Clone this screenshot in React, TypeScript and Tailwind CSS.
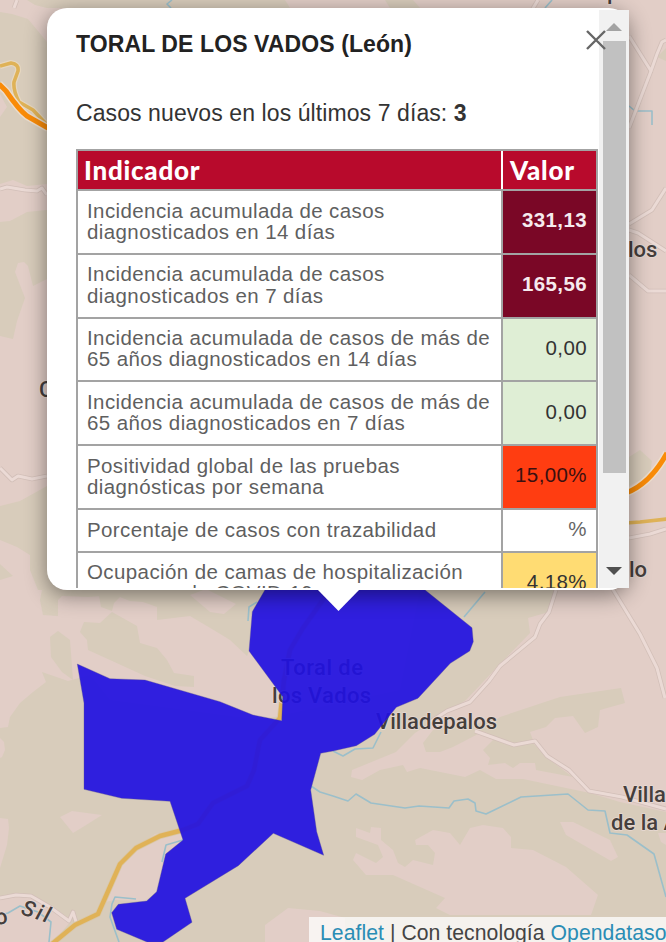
import { clsx } from "clsx";

type Indicator = {
  label: string[];
  value: string;
  tone: string;
};

const indicators: Indicator[] = [
  {
    label: ["Incidencia acumulada de casos", "diagnosticados en 14 días"],
    value: "331,13",
    tone: "bg-[#7a0726] text-[#f6eaee] font-bold",
  },
  {
    label: ["Incidencia acumulada de casos", "diagnosticados en 7 días"],
    value: "165,56",
    tone: "bg-[#7a0726] text-[#f6eaee] font-bold",
  },
  {
    label: ["Incidencia acumulada de casos de más de", "65 años diagnosticados en 14 días"],
    value: "0,00",
    tone: "bg-[#dfeed5] text-[#333]",
  },
  {
    label: ["Incidencia acumulada de casos de más de", "65 años diagnosticados en 7 días"],
    value: "0,00",
    tone: "bg-[#dfeed5] text-[#333]",
  },
  {
    label: ["Positividad global de las pruebas", "diagnósticas por semana"],
    value: "15,00%",
    tone: "bg-[#ff3d11] text-[#3b1010]",
  },
  {
    label: ["Porcentaje de casos con trazabilidad"],
    value: "%",
    tone: "bg-white text-[#666]",
  },
  {
    label: ["Ocupación de camas de hospitalización", "por casos de COVID-19"],
    value: "4,18%",
    tone: "bg-[#ffdc73] text-[#333]",
  },
];

const WOODS = [
  "0,12 12,14 28,19 47,42 60,60 60,190 47,184 27,186 13,180 0,184 0,117 7,107 0,94",
  "27,0 285,0 290,8 47,8 35,5",
  "385,0 413,0 420,8 390,8",
  "0,222 10,221 27,212 47,210 60,210 60,279 47,279 33,286 28,266 24,262 18,263 15,272 25,298 17,321 13,339 0,336",
  "60,482 47,486 20,501 0,506 0,540 17,547 30,555 30,570 38,590 60,590",
  "0,564 13,576 0,580",
  "40,600 42,590 100,590 102,596 88,597 62,596 58,600 58,616 43,615",
  "98,590 270,590 252,612 249,651 247,656 230,640 212,629 190,616 157,620 157,607 143,602 130,601 120,597 114,603 112,611 101,607",
  "80,632 84,622 100,623 112,612 137,626 140,643 157,648 167,660 174,673 194,676 194,687 175,686 145,676 110,660 88,650 87,640",
  "50,637 58,631 70,640 73,680 62,672 51,657",
  "0,728 8,727 10,717 20,703 33,692 46,682 42,672 68,681 90,675 110,700 260,720 400,690 420,590 556,590 549,612 528,618 530,633 500,664 466,700 415,733 396,752 352,770 351,777 362,780 380,770 403,765 407,772 420,768 465,777 480,770 496,779 523,779 566,788 590,793 620,802 666,812 666,942 0,942",
  "500,717 560,697 621,688 625,703 600,710 598,727 585,733 573,716 555,718 546,727 530,732 533,740 513,745 480,733 453,747 440,752 426,752 423,743 433,730 496,720",
  "483,750 493,740 533,743 546,757 566,772 573,777 536,770 535,763 520,763 513,768 505,763 488,765 490,758",
  "629,457 640,450 652,461 650,475 629,486",
  "657,57 666,48 666,61",
];

const CLEARINGS = [
  "190,595 206,589 236,604 224,614 210,612",
  "0,738 4,742 5,750 2,757 0,758",
  "0,818 8,819 9,828 7,845 0,868",
  "60,817 72,811 102,815 83,827 73,833",
  "0,897 29,896 50,908 72,920 53,942 0,942",
  "183,828 155,834 132,850 121,864 105,902 115,900 145,901 156,892 166,854 183,840",
  "265,942 265,925 288,908 320,911 345,918 345,942",
  "560,822 573,822 610,840 618,857 611,861 566,835",
  "415,840 433,830 450,833 460,845 470,828 483,825 503,828 511,837 511,848 533,850 566,867 598,895 591,915 450,915 436,908 445,898 393,875 366,875 353,860 356,853 376,863 383,857 378,845 356,837 356,828 370,833 371,827 381,828 381,840 393,850 398,863 405,867 413,860 433,865 435,853 428,845 416,845",
  "658,833 666,833 666,845 661,842",
];

const ROADS = [
  "0,189 7,187 25,190 37,191 42,188 47,195",
  "0,468 12,480 18,476 32,479 47,476",
  "629,36 651,71 657,54 662,42 666,40",
  "651,71 629,128",
  "629,224 652,210 666,188",
  "629,230 638,233 666,251",
  "629,275 648,291 666,291",
  "629,538 650,534 666,529",
  "556,590 549,612 540,624 535,637 500,666 489,681 470,702 447,711 430,722",
  "475,731 514,745 535,741 547,756 569,770 589,791 622,797 666,809",
  "612,588 640,634 657,668 665,698",
  "0,898 16,895 31,896 50,907 69,921 73,912 77,925",
  "14,8 17,0",
  "532,10 538,0",
];

const WATERWAYS = [
  "629,106 635,111 652,111 652,125",
  "485,592 464,617",
  "257,602 249,607 248,621",
  "333,751 343,756 355,749 373,748 381,732",
  "311,786 320,792 333,796 348,801 356,794 371,803 405,808 419,806 449,808 454,801 468,799 475,803 476,811 486,814 521,797 568,794 588,810 605,811 610,833 627,835 654,854 666,897",
  "183,840 166,845 162,862",
  "136,899 115,897 112,904 110,917 119,942",
  "49,942 51,922 38,912 20,906 8,913 0,915",
  "172,0 167,4 171,8",
  "545,8 552,0",
];

const MUNICIPALITY =
  "77.3,664 110,678.7 145,680 220,701.7 253,715 281.7,720.7 282.7,696.7 249,651 252.3,611.7 264.3,591 270,580 414,580 426.3,591 472,627.7 473.3,641.7 469.7,651 450.3,663.3 418,698.3 396.3,707.3 374.7,734.3 356.3,745.7 333,751 320.7,753.3 310.7,790 316.7,831.7 323.7,855.3 273.3,833.3 238.3,865.7 185,898.3 192,922.3 163,942 147,942 116.7,929.3 111.7,912.7 118.3,904.3 146.7,901 156.7,891.7 165.7,854 183,840 170,801.3 121.7,798.3 84,789.3 84,703";

const LOCAL_ROAD =
  "330,590 303,628 290,650 284,680 280,718 260,740 254,770 247,786 213,803 198,824 183,830 160,836 136,848 120,864 98,914 75,925 52,944";

function MapLayer() {
  return (
    <svg viewBox="0 0 666 942" className="block h-full w-full" fill="none" strokeLinejoin="round">
      <rect width="666" height="942" fill="#e2cec7" />
      {WOODS.map((p) => (
        <polygon key={p} points={p} fill="#d8ccbb" />
      ))}
      {CLEARINGS.map((p) => (
        <polygon key={p} points={p} fill="#e2cec7" />
      ))}
      {WATERWAYS.map((p) => (
        <polyline key={p} points={p} stroke="#9bbfca" strokeWidth="1.6" />
      ))}
      {ROADS.map((p) => (
        <polyline key={p} points={p} stroke="#d2bfb8" strokeWidth="4.6" />
      ))}
      {ROADS.map((p) => (
        <polyline key={p} points={p} stroke="#ebdad5" strokeWidth="3" />
      ))}

      {/* Secondary and main roads */}
      <polyline points={LOCAL_ROAD} stroke="#d9c7a6" strokeWidth="6" />
      <polyline points={LOCAL_ROAD} stroke="#e0b257" strokeWidth="4.4" />
      <path d="M0 66 L11 63 Q19 64 18 71 L14 82 Q13 90 19 102 L33 110 L48 126" stroke="#e6d7c0" strokeWidth="6" />
      <path d="M0 66 L11 63 Q19 64 18 71 L14 82 Q13 90 19 102 L33 110 L48 126" stroke="#dfb257" strokeWidth="3.6" />
      <path d="M-1 84 L6 91 Q19 110 27 116 L48 128" stroke="#ecdccb" strokeWidth="8" />
      <path d="M-1 84 L6 91 Q19 110 27 116 L48 128" stroke="#f98b08" strokeWidth="5" />
      <path d="M626 523 L640 522 L667 519" stroke="#dfb257" strokeWidth="3.6" />
      <path d="M626 493 Q650 484 667 453" stroke="#ecdccb" strokeWidth="8" />
      <path d="M626 493 Q650 484 667 453" stroke="#f98b08" strokeWidth="5" />

      {/* Place names */}
      <g fill="#453e3c" className="font-['Roboto'] text-[22px] font-medium" stroke="#e8dad4" strokeWidth="1.5" paintOrder="stroke">
        <text x="281" y="675" textLength="82">Toral de</text>
        <text x="272" y="703" textLength="99">los Vados</text>
        <text x="376" y="729" textLength="121">Villadepalos</text>
        <text x="623" y="802">Villa</text>
        <text x="611" y="830">de la A</text>
        <text x="628" y="257">los</text>
        <text x="629" y="577">lo</text>
        <text x="39" y="397">C</text>
        <text x="600" y="-1">q</text>
        <text x="-4" y="925" transform="rotate(-8 -4 925)">o</text>
        <text x="20" y="914" transform="rotate(18 20 914)" fontStyle="italic" letterSpacing="2.5">Sil</text>
      </g>

      <polygon points={MUNICIPALITY} fill="#2110e1" fillOpacity="0.92" stroke="#5a4f8f" strokeOpacity="0.35" strokeWidth="1" />
    </svg>
  );
}

function IndicatorTable() {
  return (
    <div className="w-[522px] border-l-2 border-t-2 border-[#a3a3a3]">
      <div className="flex h-[40px] border-b-2 border-[#a3a3a3] bg-[#b80a2c] font-['Lato'] text-[26px] leading-[39px] font-black tracking-[0.75px] text-white">
        <div className="w-[425px] border-r-2 border-white pl-[6px]">Indicador</div>
        <div className="flex-1 border-r-2 border-[#a3a3a3] pl-[7px]">Valor</div>
      </div>
      {indicators.map((row, i) => (
        <div
          key={i}
          className={clsx(
            "flex border-b-2 border-[#a3a3a3] text-[20.5px] leading-[21.3px] tracking-[0.4px]",
            row.label.length > 1 ? "h-[63.8px]" : "h-[42.6px]"
          )}
        >
          <div className="flex w-[425px] flex-col justify-center border-r-2 border-[#a3a3a3] pb-[2px] pl-[9px] whitespace-nowrap text-[#5f5f5f]">
            {row.label.map((line) => (
              <span key={line}>{line}</span>
            ))}
          </div>
          <div className={clsx("flex flex-1 items-center justify-end border-r-2 border-[#a3a3a3] pr-[9px] pb-[4px]", row.tone)}>
            {row.value}
          </div>
        </div>
      ))}
    </div>
  );
}

function Scrollbar() {
  return (
    <div className="flex w-[30px] shrink-0 flex-col items-center bg-[#f1f1f1]">
      <div className="flex h-[31px] w-full items-end justify-center pb-[10px]">
        <svg width="16" height="8" viewBox="0 0 16 8">
          <path d="M0 8 L8 0 L16 8 Z" fill="#a3a3a3" />
        </svg>
      </div>
      <div className="h-[432px] w-[23px] bg-[#c1c1c1]"></div>
      <div className="mt-auto flex h-[21px] w-full justify-center">
        <svg width="16" height="8" viewBox="0 0 16 8">
          <path d="M0 0 L8 8 L16 0 Z" fill="#505050" />
        </svg>
      </div>
    </div>
  );
}

function Popup() {
  return (
    <div className="absolute top-[8px] left-[47px] h-[582px] w-[582px] rounded-[20px] bg-white py-[2px] shadow-[0_5px_21px_rgba(0,0,0,0.45)]">
      <div className="flex h-[578px] overflow-hidden">
        <div className="w-[552px] pl-[29px]">
          <h2 className="pt-[20px] text-[23px] leading-[28px] font-bold tracking-[0.1px] text-[#222]">TORAL DE LOS VADOS (León)</h2>
          <p className="mt-[41px] mb-[22px] text-[23px] leading-[28px] tracking-[0.09px] text-[#333]">
            Casos nuevos en los últimos 7 días: <b>3</b>
          </p>
          <IndicatorTable />
        </div>
        <Scrollbar />
      </div>
      <svg className="absolute top-[581px] left-[270px]" width="43" height="23" viewBox="0 0 43 23">
        <path d="M0 0 H43 L21.5 22 Z" fill="#fff" />
      </svg>
      <svg className="absolute top-[22px] left-[539px]" width="20" height="20" viewBox="0 0 20 20">
        <path d="M1 1 L19 19 M19 1 L1 19" stroke="#666" strokeWidth="2.4" />
      </svg>
    </div>
  );
}

export default function App() {
  return (
    <main className="relative h-[942px] w-[666px] overflow-hidden font-['Liberation_Sans',sans-serif]">
      <MapLayer />
      <Popup />
      <footer className="absolute right-0 bottom-0 h-[25px] w-[357px] overflow-hidden bg-white/75 pl-[11px] text-[21.2px] leading-[31px] tracking-[0.05px] whitespace-nowrap text-[#444]">
        <a className="text-[#2a8db5]">Leaflet</a> | Con tecnología <a className="text-[#2a8db5]">Opendataso</a>
      </footer>
    </main>
  );
}
